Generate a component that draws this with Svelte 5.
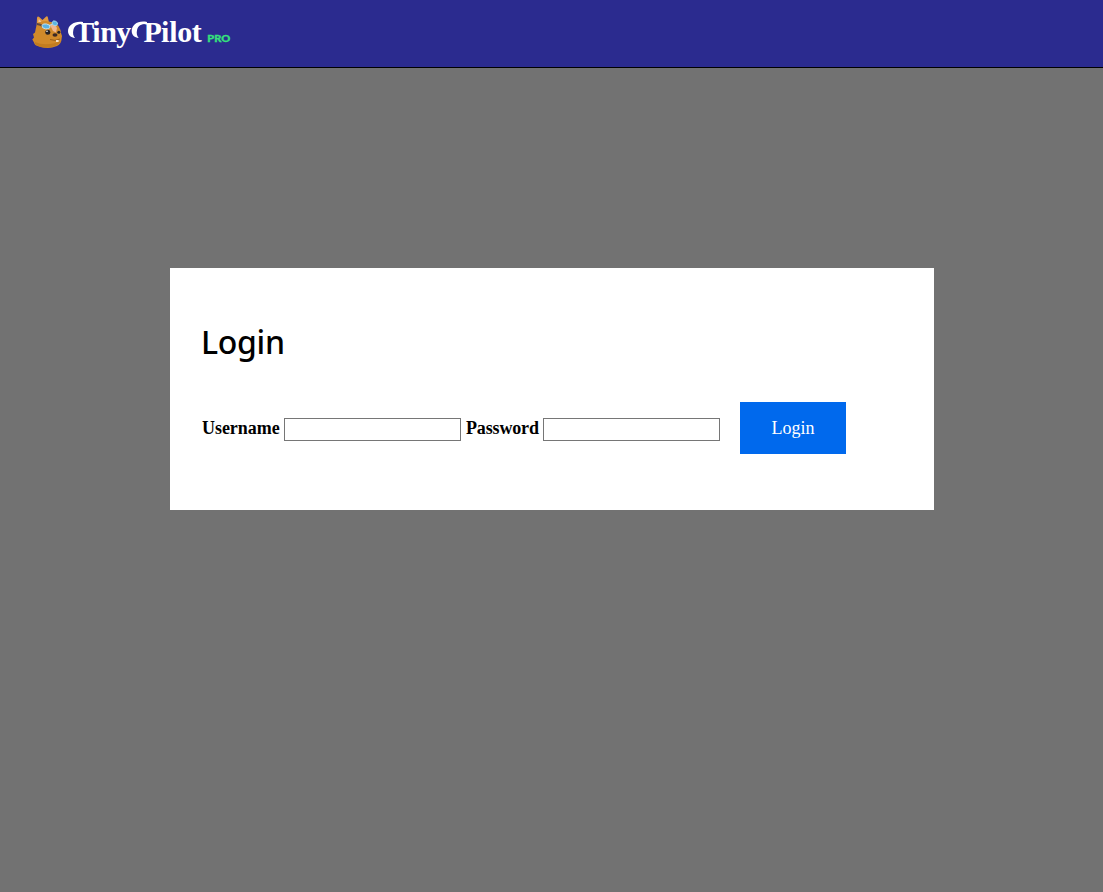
<script>
  let username = $state('');
  let password = $state('');
</script>

<div class="page">
  <header>
    <svg class="logo" width="200" height="40" viewBox="32 12 200 40" role="img" aria-label="TinyPilot Pro">
      <defs>
        <clipPath id="letters">
          <path clip-rule="evenodd" d="M64 10H240V55H64Z M74 20H80.8V40H74Z" />
        </clipPath>
      </defs>
      <g>
        <path d="M36.5 28 L37 18 Q37.5 15.8 39.2 17 L42.5 20 L46.2 16.5 Q47.8 15.5 48 18 L50 27Z" fill="#e09a40" />
        <path d="M38.3 22 L38.8 18.8 L41.5 22Z" fill="#edc3a0" />
        <path d="M37 25 Q39 21 46 21 Q55 22 58.5 26 Q61 30 61 33 Q62.5 36 61.7 38 Q61.5 44 57 46 Q48 49.5 40 46.5 Q34.5 46 34 42.5 L32.3 39.5 L34 37.5 L33 34 L35 32.5 Q35.5 28 37 25Z" fill="#d18a2a" />
        <path d="M35 42 Q46 47 61 41 Q58 46 51 47.2 Q40 49 35 44Z" fill="#c27c20" />
        <path d="M50 25 Q55 24 57 28 L56 32.5 L53 31Z" fill="#efb590" />
        <path d="M37 24 Q40 24 44 27" fill="none" stroke="#60483c" stroke-width="1.8" />
        <path d="M49 25.5 L53 24" stroke="#b8d8e6" stroke-width="1.2" />
        <ellipse cx="46" cy="26.4" rx="4.1" ry="2.5" fill="#5bb3e2" stroke="#d3eaf2" stroke-width=".8" transform="rotate(10 46 26.4)" />
        <ellipse cx="54.8" cy="23.3" rx="2.8" ry="2.2" fill="#5bb3e2" stroke="#a8dced" stroke-width=".8" transform="rotate(25 54.8 23.3)" />
        <circle cx="47.8" cy="32.2" r="2.5" fill="#292324" />
        <circle cx="47" cy="31.2" r=".8" fill="#fff" />
        <circle cx="58.8" cy="32.2" r="1.5" fill="#292324" />
        <ellipse cx="55" cy="35" rx="2.5" ry="1.7" fill="#3b2925" />
        <path d="M50 39.5 Q55 41.5 60 39" fill="none" stroke="#875018" stroke-width=".8" />
        <path d="M56 40h2.6v2H56z" fill="#f3dfc8" />
      </g>
      <g fill="#fff">
        <path d="M83 21.9 C74.5 20.7 68 25 68 31 C68 35.2 71 37.6 75 38 C73.1 36 72.6 33 73.4 29.7 C74.6 25.4 78 23.8 83 24Z" />
        <path d="M147 21.9 C138 20 131.7 24.8 131.7 31 C131.7 35.2 134.7 37.6 138.7 38 C136.8 36 136.3 33 137.1 29.7 C138.3 25.4 141.5 23.8 147 24Z" />
        <text class="word" clip-path="url(#letters)" y="41.8" x="74.2 92.3 100.3 116.3 143.4 161 169.2 177.2 191.8">TinyPilot</text>
      </g>
      <text class="pro" x="207.3" y="41.5" textLength="23" lengthAdjust="spacingAndGlyphs">PRO</text>
    </svg>
  </header>

  <main>
    <h1>Login</h1>
    <form onsubmit={(event) => event.preventDefault()}>
      <label class="user" for="username">Username</label>
      <input id="username" type="text" bind:value={username} />
      <label class="pass" for="password">Password</label>
      <input id="password" type="password" bind:value={password} />
      <button type="submit">Login</button>
    </form>
  </main>
</div>

<style>
  :global(body) {
    margin: 0;
    background: #727272;
  }
  .page {
    min-height: 892px;
    background: #727272;
    color: #000;
    font-family: "Liberation Serif", serif;
  }
  header {
    box-sizing: border-box;
    height: 68px;
    padding: 12px 32px;
    background: #2b2b8f;
    border-bottom: 1px solid #000;
  }
  .logo {
    display: block;
  }
  .word {
    font: bold 30px "Liberation Serif", serif;
  }
  .pro {
    fill: #35e27c;
    stroke: #35e27c;
    stroke-width: 0.3px;
    font: 900 10px Lato, sans-serif;
  }
  main {
    box-sizing: border-box;
    width: 764px;
    height: 242px;
    margin: 200px 0 0 170px;
    padding: 52px 32px 0;
    background: #fff;
  }
  h1 {
    width: max-content;
    height: 44px;
    margin: 0 0 38px -1px;
    font: 500 32px/43px "Noto Sans", sans-serif;
    letter-spacing: -0.3px;
  }
  form {
    display: flex;
    align-items: center;
    height: 52px;
  }
  label {
    flex: none;
    font-size: 18px;
    font-weight: bold;
    line-height: 24px;
    white-space: nowrap;
  }
  .user {
    width: 82px;
    letter-spacing: -0.05px;
  }
  .pass {
    width: 77px;
    margin-left: 5px;
    letter-spacing: -0.15px;
  }
  input {
    box-sizing: border-box;
    flex: none;
    width: 177px;
    height: 23px;
    margin: 3px 0 0;
    padding: 1px 2px;
    border: 1px solid #767676;
    border-radius: 0;
    background: #fff;
  }
  input:focus {
    outline: 1px solid #0069ed;
  }
  button {
    width: 106px;
    height: 52px;
    margin-left: 20px;
    padding: 1px 0 0;
    border: 0;
    background: #0069ed;
    color: #fff;
    font: 18px "Liberation Serif", serif;
    cursor: pointer;
  }
</style>
